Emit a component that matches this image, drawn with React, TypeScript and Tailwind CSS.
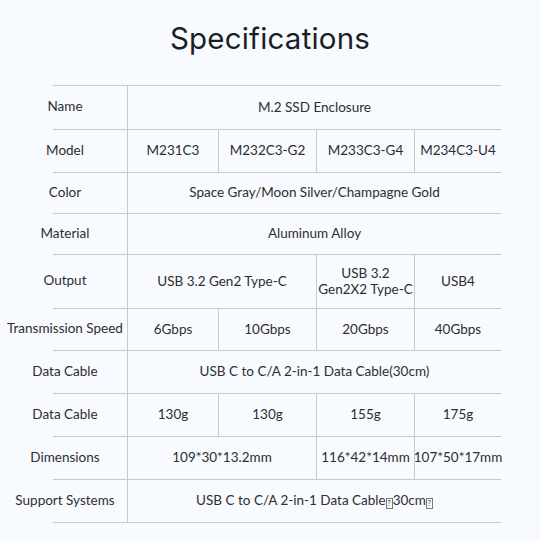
import React from "react"

type Cell = { text: React.ReactNode; span?: number }
type Row = { label: string; h: string; cells: Cell[] }

const Tofu = () => (
  <span className="inline-block align-[-1px] w-[7px] h-[11px] border border-[#777] text-[7px] leading-[9px] text-center">
    ?
  </span>
)

const rows: Row[] = [
  { label: "Name", h: "h-[44px]", cells: [{ text: "M.2 SSD Enclosure", span: 4 }] },
  {
    label: "Model",
    h: "h-[43px]",
    cells: [{ text: "M231C3" }, { text: "M232C3-G2" }, { text: "M233C3-G4" }, { text: "M234C3-U4" }],
  },
  { label: "Color", h: "h-[41px]", cells: [{ text: "Space Gray/Moon Silver/Champagne Gold", span: 4 }] },
  { label: "Material", h: "h-[41px]", cells: [{ text: "Aluminum Alloy", span: 4 }] },
  {
    label: "Output",
    h: "h-[54px]",
    cells: [
      { text: "USB 3.2 Gen2 Type-C", span: 2 },
      {
        text: (
          <>
            USB 3.2
            <br />
            Gen2X2 Type-C
          </>
        ),
      },
      { text: "USB4" },
    ],
  },
  {
    label: "Transmission Speed",
    h: "h-[42px]",
    cells: [{ text: "6Gbps" }, { text: "10Gbps" }, { text: "20Gbps" }, { text: "40Gbps" }],
  },
  { label: "Data Cable", h: "h-[43px]", cells: [{ text: "USB C to C/A 2-in-1 Data Cable(30cm)", span: 4 }] },
  {
    label: "Data Cable",
    h: "h-[43px]",
    cells: [{ text: "130g" }, { text: "130g" }, { text: "155g" }, { text: "175g" }],
  },
  {
    label: "Dimensions",
    h: "h-[43px]",
    cells: [{ text: "109*30*13.2mm", span: 2 }, { text: "116*42*14mm" }, { text: "107*50*17mm" }],
  },
  {
    label: "Support Systems",
    h: "h-[43px]",
    cells: [
      {
        text: (
          <>
            USB C to C/A 2-in-1 Data Cable
            <Tofu />
            30cm
            <Tofu />
          </>
        ),
        span: 4,
      },
    ],
  },
]

const spanClass: Record<number, string> = {
  1: "col-span-1",
  2: "col-span-2",
  4: "col-span-4",
}

export default function App() {
  return (
    <div className="w-[540px] h-[540px] bg-[#f7faff] text-[#2e2e2e] overflow-hidden font-['Lato','Liberation_Sans',sans-serif]">
      <h1 className="pt-[18px] h-[85px] text-center text-[29.5px] leading-[40px] text-[#1b1e25] font-['Inter','Noto_Sans',sans-serif] tracking-[0.2px]">
        Specifications
      </h1>
      <div className="ml-[53px] w-[448px] border-t border-[#c9c9c9]">
        {rows.map((row, i) => (
          <div key={i} className={`flex border-b border-[#c9c9c9] ${row.h}`}>
            <div className="-ml-[50px] w-[125px] shrink-0 flex items-center justify-center border-r border-[#c9c9c9] text-[13.5px] pb-[2px] whitespace-nowrap">
              {row.label}
            </div>
            <div className="grid grid-cols-[90px_98px_98px_87px] flex-1">
              {row.cells.map((c, j) => (
                <div
                  key={j}
                  className={`${spanClass[c.span ?? 1]} flex items-center justify-center text-center text-[13.5px] leading-[16px] pb-[2px] whitespace-nowrap ${
                    j > 0 ? "border-l border-[#c9c9c9]" : ""
                  }`}
                >
                  <span>{c.text}</span>
                </div>
              ))}
            </div>
          </div>
        ))}
      </div>
    </div>
  )
}
